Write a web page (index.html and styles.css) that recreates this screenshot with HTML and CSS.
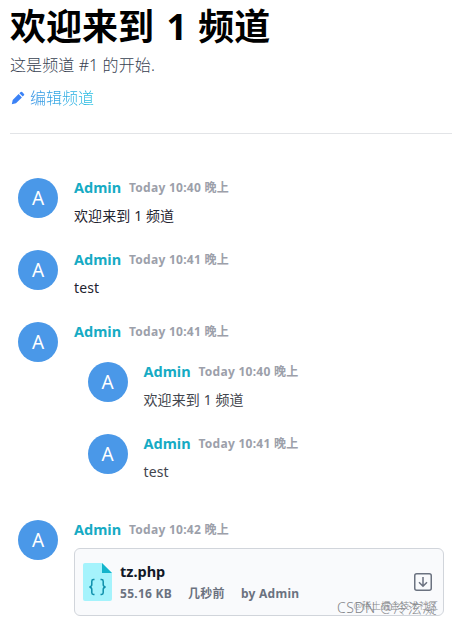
FILE: index.html
```html
<!DOCTYPE html>
<html lang="zh-CN">
<head>
  <meta charset="UTF-8">
  <title>频道</title>
  <link rel="stylesheet" href="styles.css">
</head>
<body>
<div class="channel">
  <header class="channel-header">
    <h1>欢迎来到 <span class="channel-name">1</span> 频道</h1>
    <p class="intro">这是频道 #1 的开始.</p>
    <a class="edit-link">
      <svg class="edit-icon" viewBox="0 0 14 14">
        <path fill="#3b82f6" d="M.8 13.200l.9-4.200L7.600 3.100l3.300 3.300L5 12.300zM8.400 2.300l1.300-1.300q.7-.6 1.400 0l1.900 1.900q.6.700 0 1.400l-1.300 1.300z"/>
      </svg>
      <span>编辑频道</span>
    </a>
  </header>

  <div class="messages">
    <div class="message">
      <div class="avatar">A</div>
      <div class="message-body">
        <div class="message-head"><span class="author">Admin</span><span class="time">Today 10:40 晚上</span></div>
        <div class="text">欢迎来到 1 频道</div>
      </div>
    </div>

    <div class="message">
      <div class="avatar">A</div>
      <div class="message-body">
        <div class="message-head"><span class="author">Admin</span><span class="time">Today 10:41 晚上</span></div>
        <div class="text">test</div>
      </div>
    </div>

    <!-- forwarded messages -->
    <div class="message forward">
      <div class="avatar">A</div>
      <div class="message-body">
        <div class="message-head"><span class="author">Admin</span><span class="time">Today 10:41 晚上</span></div>
        <div class="nested">
          <div class="message">
            <div class="avatar">A</div>
            <div class="message-body">
              <div class="message-head"><span class="author">Admin</span><span class="time">Today 10:40 晚上</span></div>
              <div class="text">欢迎来到 1 频道</div>
            </div>
          </div>
          <div class="message">
            <div class="avatar">A</div>
            <div class="message-body">
              <div class="message-head"><span class="author">Admin</span><span class="time">Today 10:41 晚上</span></div>
              <div class="text">test</div>
            </div>
          </div>
        </div>
      </div>
    </div>

    <div class="message">
      <div class="avatar">A</div>
      <div class="message-body">
        <div class="message-head"><span class="author">Admin</span><span class="time">Today 10:42 晚上</span></div>
        <div class="file-card">
          <svg class="file-icon" viewBox="0 0 29 38">
            <path fill="#a5f3fc" d="M2 0h17l10 10v26q0 2-2 2H2q-2 0-2-2V2q0-2 2-2z"/>
            <path fill="#14b4cb" d="M19 0l10 10H19z"/>
            <path fill="none" stroke="#0e8fab" stroke-width="1.500" d="M11.500 16.500h-1q-1.700 0-1.700 1.700v3.300q0 2-2.300 2.500 2.300.5 2.300 2.500v3.300q0 1.700 1.700 1.700h1M17.500 16.500h1q1.700 0 1.700 1.700v3.300q0 2 2.300 2.500-2.300.5-2.300 2.500v3.300q0 1.700-1.700 1.700h-1"/>
          </svg>
          <div class="file-info">
            <div class="file-name">tz.php</div>
            <div class="file-meta">
              <span>55.16 KB</span>
              <span>几秒前</span>
              <span>by Admin</span>
            </div>
          </div>
          <svg class="download" viewBox="0 0 18 18" fill="none" stroke="#6b7280" stroke-width="1.500">
            <rect x=".75" y=".75" width="16.500" height="16.500" rx="2"/>
            <path d="M9 4v9M5 9.200l4 4 4-4"/>
          </svg>
          <span class="watermark watermark-back">@稀土掘金技术社区</span>
          <span class="watermark watermark-front">CSDN @冷泫凝</span>
        </div>
      </div>
    </div>
  </div>
</div>
</body>
</html>
```
FILE: styles.css
```css
body {
  margin: 0;
  background-color: #fff;
  font-family: "Noto Sans", "Noto Sans CJK SC", sans-serif;
}

.channel {
  box-sizing: border-box;
  height: 625px;
  padding-left: 10px;
  overflow: hidden;
  white-space: nowrap;
}

.channel-header {
  height: 133px;
  border-bottom: 1px solid #e2e4e7;
}

h1 {
  margin: 0;
  padding-top: 4px;
  font-size: 36px;
  line-height: 46px;
  font-weight: 700;
  color: #000;
}

.channel-name {
  margin: 0 2px 0 3px;
}

.intro {
  margin: 3px 0 0;
  font-size: 16px;
  line-height: 24px;
  letter-spacing: 0.1px;
  font-weight: 300;
  color: #374151;
}

.edit-link {
  display: flex;
  align-items: center;
  gap: 5px;
  margin-top: 9px;
  padding-left: 1px;
  font-size: 16px;
  line-height: 24px;
  font-weight: 300;
}

.edit-link span {
  background-image: linear-gradient(90deg, #2f8fe4, #1fbde0);
  background-clip: text;
  -webkit-background-clip: text;
  color: transparent;
}

.edit-icon {
  width: 14px;
  height: 14px;
}

.messages {
  padding: 44px 8px 0;
}

.message {
  display: flex;
  gap: 16px;
  height: 72px;
}

.forward {
  height: 198px;
}

.avatar {
  flex: none;
  width: 40px;
  height: 40px;
  border-radius: 50%;
  background-color: #4a98e8;
  color: #fff;
  font-size: 19px;
  line-height: 41px;
  text-align: center;
}

.message-body {
  flex: 1;
}

.message-head {
  display: flex;
  height: 20px;
  line-height: 20px;
}

.author {
  width: 55px;
  font-size: 14.500px;
  line-height: 18px;
  font-weight: 700;
  color: #16abc4;
}

.time {
  font-size: 12px;
  letter-spacing: 0.270px;
  font-weight: 700;
  color: #9ca0aa;
}

.text {
  margin-top: 8px;
  font-size: 14px;
  line-height: 20px;
  letter-spacing: 0.1px;
  color: #1f2430;
}

.nested {
  padding: 19.500px 0 0 13.500px;
}

.nested .text {
  color: #42454d;
}

.file-card {
  position: relative;
  display: flex;
  align-items: center;
  box-sizing: border-box;
  width: 370px;
  height: 68px;
  margin-top: 8px;
  padding: 0 11px 0 8px;
  border: 1px solid #d1d5db;
  border-radius: 6px;
  background-color: #f9fafc;
}

.file-icon {
  width: 29px;
  height: 38px;
}

.file-info {
  flex: 1;
  margin-left: 8px;
}

.file-name {
  font-size: 14.500px;
  line-height: 20px;
  font-weight: 700;
  color: #111827;
}

.file-meta {
  display: flex;
  gap: 16px;
  margin-top: 3px;
  font-size: 12px;
  line-height: 20px;
  letter-spacing: 0.270px;
  font-weight: 700;
  color: #6b7280;
}

.download {
  width: 18px;
  height: 18px;
}

.watermark {
  position: absolute;
  font-weight: 300;
  color: #85878b;
}

.watermark-back {
  right: 5px;
  bottom: 2px;
  font-size: 9.500px;
  line-height: 14px;
}

.watermark-front {
  right: 6px;
  bottom: -3px;
  font-size: 14px;
  line-height: 20px;
  letter-spacing: 0.6px;
}
```
